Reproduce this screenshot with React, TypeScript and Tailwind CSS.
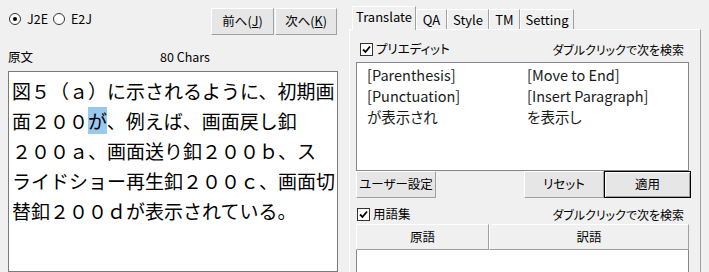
import React from 'react';

const ui = "font-['Noto_Sans_CJK_JP','Noto_Sans',sans-serif] [font-feature-settings:'palt']";

const Radio = ({ checked, label }: { checked?: boolean; label: string }) => (
  <div className="flex items-center">
    <div className="w-[12px] h-[12px] rounded-full border border-[#333] bg-white flex items-center justify-center">
      {checked && <div className="w-[4px] h-[4px] rounded-full bg-black" />}
    </div>
    <span className="ml-[6px] text-[12.5px] leading-none">{label}</span>
  </div>
);

const Check = ({ label, className }: { label: string; className?: string }) => (
  <div className={`flex items-center ${className || ''}`}>
    <div className="w-[13px] h-[13px] border border-[#333] bg-white flex items-center justify-center">
      <svg width="9" height="9" viewBox="0 0 9 9">
        <path d="M1 4.5 L3.5 7 L8 1.5" stroke="#000" strokeWidth="1.8" fill="none" />
      </svg>
    </div>
    <span className="ml-[3px] text-[12.5px] leading-none">{label}</span>
  </div>
);

const Btn = ({ children, className, isDefault }: { children: React.ReactNode; className?: string; isDefault?: boolean }) => (
  <div
    className={`flex items-center justify-center bg-[#e6e6e6] text-[12.5px] leading-none ${
      isDefault
        ? 'border border-black shadow-[inset_1px_1px_0_#fff,inset_-1px_-1px_0_#a0a0a0]'
        : 'border border-t-white border-l-white border-r-[#a0a0a0] border-b-[#a0a0a0]'
    } ${className || ''}`}
  >
    {children}
  </div>
);

const Tab = ({ label, w, selected }: { label: string; w: string; selected?: boolean }) =>
  selected ? (
    <div className={`${w} h-[24px] -mb-px relative z-10 bg-[#f0f0f0] border-t border-l border-white border-r border-r-[#a0a0a0] flex items-center justify-center pb-[3px] text-[13px]`}>
      {label}
    </div>
  ) : (
    <div className={`${w} h-[20px] bg-[#f0f0f0] border-t border-l border-white border-r border-r-[#a0a0a0] flex items-center justify-center text-[13px]`}>
      {label}
    </div>
  );

export default function App() {
  return (
    <div className={`w-[709px] h-[272px] overflow-hidden bg-[#f0f0f0] flex text-black ${ui}`}>
      {/* 左: 原文 */}
      <div className="w-[346px] flex flex-col pl-[8px] pr-[8px]">
        <div className="flex justify-between pt-[8px] h-[35px]">
          <div className="flex items-start gap-[5px] pl-[1px] mt-[5px] h-[12px]">
            <Radio checked label="J2E" />
            <Radio label="E2J" />
          </div>
          <div className="flex gap-[1px] mr-[1px]">
            <Btn className="w-[63px] h-[27px]">前へ(<u>J</u>)</Btn>
            <Btn className="w-[62px] h-[27px]">次へ(<u>K</u>)</Btn>
          </div>
        </div>
        <div className="flex items-center mt-[13px] h-[18px] text-[12.5px]">
          <span className="w-[152px]">原文</span>
          <span>80 Chars</span>
        </div>
        <div className="mt-[5px] flex-1 bg-white border border-[#7a7a7a] pt-[4px] pl-[3px] text-[19px] leading-[30px] whitespace-nowrap [font-feature-settings:normal]">
          <div>図５（ａ）に示されるように、初期画</div>
          <div>
            面２００<span className="bg-[#99c9ef]">が</span>、例えば、画面戻し釦
          </div>
          <div>２００ａ、画面送り釦２００ｂ、ス</div>
          <div>ライドショー再生釦２００ｃ、画面切</div>
          <div>替釦２００ｄが表示されている。</div>
        </div>
      </div>

      {/* 右: タブ */}
      <div className="w-[363px] flex flex-col pl-[3px] pt-[6px]">
        <div className="flex items-end h-[23px] pl-[3px]">
          <Tab selected label="Translate" w="w-[64px]" />
          <Tab label="QA" w="w-[31px]" />
          <Tab label="Style" w="w-[42px]" />
          <Tab label="TM" w="w-[31px]" />
          <Tab label="Setting" w="w-[54px]" />
        </div>
        <div className="w-[352px] flex-1 flex flex-col border-t border-l border-white border-r border-r-[#a0a0a0]">
          <div className="flex items-center justify-between mt-[13px] h-[13px] pl-[10px] pr-[16px]">
            <Check label="プリエディット" />
            <span className="text-[12px] leading-none">ダブルクリックで次を検索</span>
          </div>
          <div className="mt-[6px] ml-[6px] w-[333px] h-[109px] shrink-0 border border-[#828790] bg-white pt-[1px] pl-[10px] text-[14.5px] leading-[21px] text-[#1a1a1a]">
            <div className="flex"><span className="w-[160px]">[Parenthesis]</span><span>[Move to End]</span></div>
            <div className="flex"><span className="w-[160px]">[Punctuation]</span><span>[Insert Paragraph]</span></div>
            <div className="flex"><span className="w-[160px]">が表示され</span><span>を表示し</span></div>
          </div>
          <div className="ml-[6px] w-[335px] h-[27px] shrink-0 flex">
            <Btn className="w-[80px] h-[27px]">ユーザー設定</Btn>
            <div className="flex-1" />
            <Btn className="w-[80px] h-[27px]">リセット</Btn>
            <Btn isDefault className="w-[87px] h-[27px]">適用</Btn>
          </div>
          <div className="flex items-center justify-between mt-[10px] h-[13px] pl-[7px] pr-[16px]">
            <Check label="用語集" />
            <span className="text-[12px] leading-none">ダブルクリックで次を検索</span>
          </div>
          <div className="mt-[3px] ml-[6px] w-[333px] flex-1 flex flex-col">
            <div className="flex h-[26px] shrink-0 text-[12.5px]">
              <div className="w-[133px] flex items-center justify-center bg-[#f0f0f0] border border-t-white border-l-white border-r-[#a0a0a0] border-b-[#a0a0a0]">原語</div>
              <div className="flex-1 flex items-center justify-center bg-[#f0f0f0] border border-t-white border-l-white border-r-[#a0a0a0] border-b-[#a0a0a0]">訳語</div>
            </div>
            <div className="flex-1 bg-white border-l border-r border-[#828790]" />
          </div>
        </div>
      </div>
    </div>
  );
}
